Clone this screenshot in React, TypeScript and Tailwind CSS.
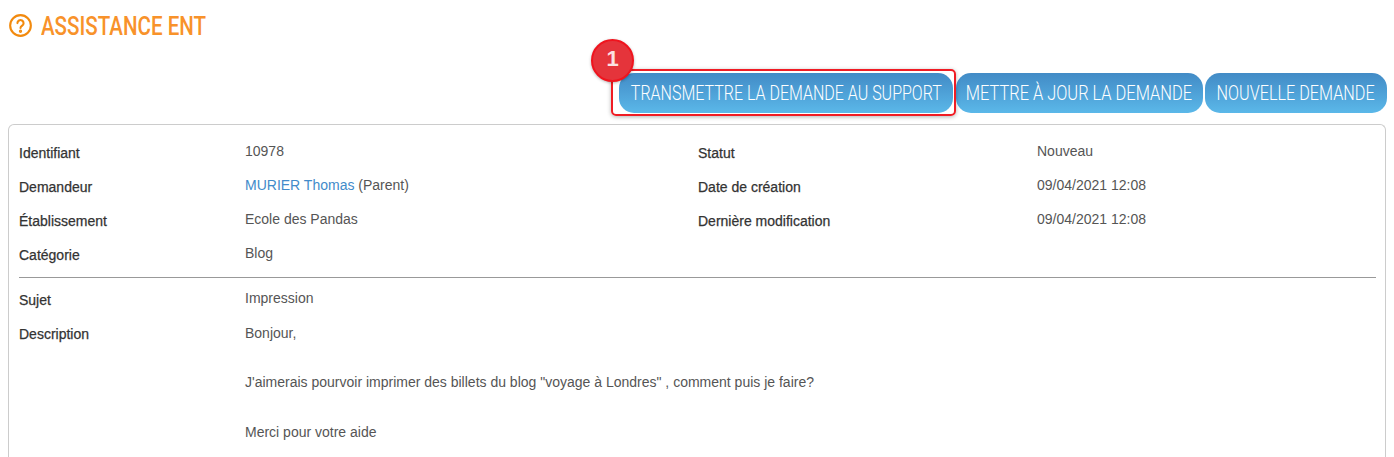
import type React from "react"

const rows: { label: string; value: React.ReactNode; label2?: string; value2?: string }[] = [
  { label: "Identifiant", value: "10978", label2: "Statut", value2: "Nouveau" },
  {
    label: "Demandeur",
    value: (
      <>
        <a className="text-[#428bca]">MURIER Thomas</a> (Parent)
      </>
    ),
    label2: "Date de création",
    value2: "09/04/2021 12:08",
  },
  { label: "Établissement", value: "Ecole des Pandas", label2: "Dernière modification", value2: "09/04/2021 12:08" },
  { label: "Catégorie", value: "Blog" },
]

const labelText = "leading-5 text-[#333] [-webkit-text-stroke:0.25px_#333]"

function ActionButton({ children, width, squeeze }: { children: React.ReactNode; width: string; squeeze: string }) {
  return (
    <button
      className={`${width} h-10 rounded-[15px] bg-gradient-to-b from-[#428bc6] to-[#5bb8e9] text-white flex items-center justify-center whitespace-nowrap`}
    >
      <span className={`inline-block ${squeeze} font-['Roboto',sans-serif] font-light text-[20px] uppercase`}>{children}</span>
    </button>
  )
}

export default function App() {
  return (
    <div className="h-[457px] overflow-hidden bg-white font-['Liberation_Sans',Arial,sans-serif] text-sm text-[#555]">
      <div className="flex items-start gap-[9px] pl-[9px] pt-[14px] h-[73px]">
        <svg width="23" height="23" viewBox="0 0 24 24" fill="none" stroke="#f28a0e" strokeWidth="2.2" strokeLinecap="round">
          <circle cx="12" cy="12" r="10.8" />
          <path d="M8.8 9.5a3.2 3.2 0 1 1 4.8 2.8c-1 .6-1.6 1.1-1.6 2.2" />
          <circle cx="12" cy="18" r=".6" fill="#f28a0e" />
        </svg>
        <h1 className="origin-left scale-x-[.79] font-['Roboto',sans-serif] font-medium text-[26px] leading-6 uppercase whitespace-nowrap text-[#f8922a]">
          Assistance ENT
        </h1>
      </div>

      <div className="flex justify-end gap-[2px] pr-[7px]">
        <div className="relative mr-px">
          <ActionButton width="w-[334px]" squeeze="scale-x-[.80]">Transmettre la demande au support</ActionButton>
          <div className="absolute -left-2 -right-[3px] -top-[4px] -bottom-[3px] rounded-[5px] border-2 border-[#f01c24] shadow-[0_1px_4px_rgba(0,0,0,0.3)]" />
          <div className="absolute -left-[28px] -top-[34px] flex h-[43px] w-[43px] items-center justify-center rounded-full border-2 border-[#f0141e] bg-[#e5343b] pb-1 text-[22px] font-bold text-white/85 shadow-[0_1px_3px_rgba(0,0,0,0.3)]">
            1
          </div>
        </div>
        <ActionButton width="w-[247px] pr-[2px]" squeeze="scale-x-[.82]">Mettre à jour la demande</ActionButton>
        <ActionButton width="w-[182px]" squeeze="scale-x-[.81]">Nouvelle demande</ActionButton>
      </div>

      <div className="mx-2 mt-[11px] h-[400px] rounded-t-[6px] border border-b-0 border-[#ccc] pl-[10px] pr-[10px] pt-[9px]">
        {rows.map((r) => (
          <div key={r.label} className="flex h-[34px]">
            <div className={`w-[226px] pt-[9px] ${labelText}`}>{r.label}</div>
            <div className="w-[453px] pt-[7px] leading-5">{r.value}</div>
            <div className={`w-[339px] pt-[9px] ${labelText}`}>{r.label2}</div>
            <div className="pt-[7px] leading-5">{r.value2}</div>
          </div>
        ))}
        <hr className="mt-[7px] mb-[6px] mr-[-1px] border-[#999]" />
        <div className="flex h-[34px]">
          <div className={`w-[226px] pt-[6px] ${labelText}`}>Sujet</div>
          <div className="pt-[4px] leading-5">Impression</div>
        </div>
        <div className="flex">
          <div className={`w-[226px] pt-[6px] ${labelText}`}>Description</div>
          <div className="pt-[3px] leading-[24.7px]">
            <p>Bonjour,</p>
            <p className="mt-[24.7px]">J'aimerais pourvoir imprimer des billets du blog "voyage à Londres" , comment puis je faire?</p>
            <p className="mt-[24.7px]">Merci pour votre aide</p>
          </div>
        </div>
      </div>
    </div>
  )
}
